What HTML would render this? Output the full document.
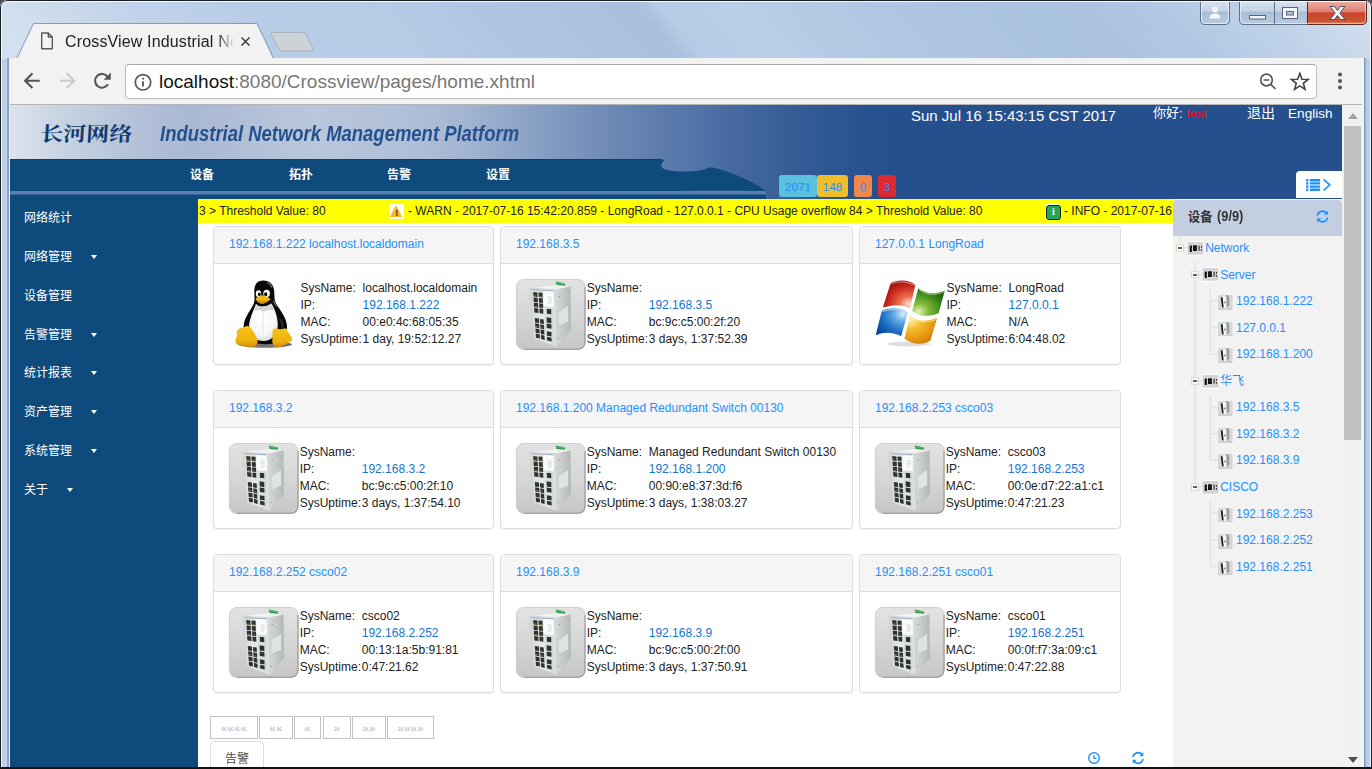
<!DOCTYPE html>
<html lang="zh"><head><meta charset="utf-8"><title>CrossView Industrial Network Management Platform</title>
<style>
*{box-sizing:border-box}
html,body{margin:0;padding:0}
body{width:1372px;height:769px;overflow:hidden;font-family:"Liberation Sans",sans-serif;font-size:12px;color:#333;background:#4a4a4a}
#win{position:relative;width:1372px;height:769px;overflow:hidden;border-radius:7px 7px 0 0;background:linear-gradient(90deg,#bdd2ea 0,#bdd2ea 1%,#c4d5ea 50%,#b2c9e5 99.500%,#bdd3eb 100%)}
#win:before{content:"";position:absolute;left:0;top:0;right:0;bottom:-8px;border:1px solid #1a1d22;border-radius:7px 7px 0 0;box-shadow:inset 0 0 0 1px rgba(255,255,255,.85);z-index:50;pointer-events:none}
#win:after{content:"";position:absolute;left:0;right:0;bottom:0;height:2px;background:#111;z-index:60}
a{color:#1e90ff;text-decoration:none}
svg.cjk{display:inline-block;vertical-align:-1.4px;overflow:visible}
svg.cjk text{font-family:"Liberation Sans","Noto Sans CJK SC",sans-serif}
.abs{position:absolute}

/* ---------- chrome ---------- */
#tb{position:absolute;left:8px;top:58px;width:1356px;height:47px;background:#f2f2f2;border:1px solid #8e9db3;border-bottom:1px solid #b4b4b4;border-top:0}
#tabline{position:absolute;left:8px;top:57px;width:1356px;height:1px;background:#8e9db3}
#tab{position:absolute;left:10px;top:22px;width:270px;height:37px}
#tab-title{position:absolute;left:65px;top:31.500px;font-size:16px;line-height:20px;color:#1d1d1d;white-space:nowrap;width:169px;overflow:hidden;letter-spacing:.15px;
 -webkit-mask-image:linear-gradient(90deg,#000 0,#000 152px,transparent 169px);mask-image:linear-gradient(90deg,#000 0,#000 152px,transparent 169px)}
#omni{position:absolute;left:125px;top:64px;width:1192px;height:35px;background:#fff;border:1px solid #bdbdbd;border-top-color:#a9a9a9;border-radius:4px}
#url{position:absolute;left:159px;top:70px;font-size:19px;line-height:24px;color:#777;white-space:nowrap}
#url b{font-weight:normal;color:#111}

/* ---------- page ---------- */
#page-bg{position:absolute;left:10px;top:105px;width:1332px;height:664px;background:#fff}
#hdr-bg{position:absolute;left:10px;top:105px;width:1332px;height:94px;background:linear-gradient(90deg,#dde3ec 0px,#d0d9e6 30px,#c2cfdf 70px,#b7c5da 110px,#aebdd5 150px,#aab9d2 181px,#aebdd5 220px,#b5c4d9 270px,#b8c7db 306px,#b4c3d9 350px,#b0c0d8 390px,#aabbd5 426px,#9fb2cf 463px,#92a8c9 499px,#859dc2 536px,#7892bb 572px,#6a87b4 609px,#5f7eae 645px,#5375a8 682px,#476ba1 718px,#3d639b 754px,#345b95 791px,#2c5591 827px,#27518e 864px,#25508d 890px,#25508d 1332px)}
#logo{position:absolute;left:40px;top:123.500px;height:24px;transform-origin:0 50%;transform:scaleX(1.15) skewX(-3deg)}
#ttl{position:absolute;left:160px;top:120.500px;font-size:22.300px;line-height:26px;font-weight:bold;font-style:italic;color:#25528f;white-space:nowrap;transform-origin:0 50%;transform:scaleX(.828)}
#date{position:absolute;left:911px;top:106px;font-size:15px;line-height:19px;color:#fff;white-space:nowrap}
#hello{position:absolute;left:1153px;top:105px;font-size:13px;line-height:17px;color:#fff;white-space:nowrap}
#hello .red{color:#ff0a14}
#logout{position:absolute;left:1246.500px;top:106px;line-height:18px}
#lang{position:absolute;left:1288px;top:105px;font-size:13.600px;line-height:18px;color:#fff}
.nav-item{position:absolute;top:167px;height:16px;line-height:16px}
#badges{position:absolute;left:779px;top:175px;height:22px;white-space:nowrap;font-size:12px}
.bd{position:absolute;top:0;height:22px;line-height:23px;text-align:center;border-radius:3px;color:#1e90ff;font-size:11.700px}
.b1{left:0;width:38px;background:#5bc0de}
.b2{left:38px;width:31px;background:#f0bd2c}
.b3{left:75px;width:18px;background:#f0874a}
.b4{left:99px;width:18px;background:#dc2a30}
#toggle{position:absolute;left:1296px;top:171px;width:46px;height:27px;background:#fff;border-radius:4px 0 0 0}

#side-bg{position:absolute;left:10px;top:199px;width:188px;height:570px;background:#0e4a7b}
.side-item{position:absolute;left:24px;height:20px;line-height:20px;white-space:nowrap}
.caret{position:absolute;top:8px;width:0;height:0;border:3.5px solid transparent;border-top:4px solid #fff;border-bottom:0}

#marq{position:absolute;left:198px;top:199px;width:975px;height:24px;background:#ff0;overflow:hidden;font-size:12px;line-height:24px;color:#222;white-space:nowrap}
#marq span{position:absolute;top:0}
#marq i{position:absolute;font-style:normal}
.warn{top:5px;width:15px;height:15px;background:#fffef0}
.warn:before{content:"";position:absolute;left:1px;top:1px;border:6.500px solid transparent;border-bottom:12.500px solid #f6b620;border-top:0}
.warn:after{content:"!";position:absolute;left:6.200px;top:4px;font-size:9px;line-height:10px;font-weight:bold;color:#3a3a3a}
.info{top:5px;width:15px;height:15px;background:#fff}
.info:before{content:"i";position:absolute;left:1px;top:1px;width:13px;height:13px;background:#27a552;border:1px solid #0c2b15;border-radius:3px;color:#fff;font-family:"Liberation Serif",serif;font-weight:bold;font-size:10px;line-height:11px;text-align:center}

/* cards */
.card{position:absolute;height:139px;border:1px solid #ddd;border-radius:4px;background:#fff;box-shadow:0 1px 1px rgba(0,0,0,.05);font-size:12px;line-height:17.14px;color:#222}
.card-h{height:37px;padding:9px 15px 0;background:#f5f5f5;border-bottom:1px solid #ddd;border-radius:3px 3px 0 0;white-space:nowrap;overflow:hidden}
.card-b{position:relative;padding:15px;height:100px}
.ic{position:absolute;left:15px;top:15px;width:70px;height:70px;overflow:visible}
.kv{position:absolute;left:85.5px;top:16px;border-collapse:collapse;border-spacing:0}
.kv td{padding:0 1px;white-space:nowrap;height:17px;line-height:17px}

#pager{position:absolute;left:210px;top:716px;height:23px;white-space:nowrap;font-size:0}
#pager span{position:absolute;top:0;height:23px;border:1px solid #c3c1d0;background:#fff;font-size:11px;line-height:22px;color:#b5b0c6;text-align:center;letter-spacing:.4px}
#tab-alarm{position:absolute;left:210px;top:741px;width:54px;height:40px;border:1px solid #ddd;border-radius:4px 4px 0 0;background:#fff;padding:10px 0 0 13.500px}

/* right panel */
#rp-bg{position:absolute;left:1173px;top:199px;width:169px;height:570px;background:#f2f2f2}
#rp-h{position:absolute;left:1173px;top:200px;width:169px;height:36px;background:#c3cfe0;padding:6.500px 0 0 14.500px;font-size:15px;line-height:19px;color:#333;border-radius:4px 4px 0 0;white-space:nowrap}
#rp-h b{position:absolute;left:44.400px;top:6px;font-weight:bold;transform-origin:0 50%;transform:scaleX(.855)}
#rp-h .cjk{transform-origin:0 50%;transform:scaleX(.935)}
.tn{position:absolute;height:20px;line-height:20px;white-space:nowrap;font-size:12px}
.tn a{position:absolute;top:0}
.exp{position:absolute;left:.200px;top:6.300px;width:7.500px;height:7.500px;border:1px solid #dcd9cf;background:#fbfaf7}
.exp:before{content:"";position:absolute;left:.600px;top:2px;width:4.400px;height:1.700px;background:#606060}
.ti-g{position:absolute;left:12px;top:2.800px;width:15px;height:15.300px}
.tn .ti-g + a{left:29.200px}
.ti-d{position:absolute;left:.200px;top:4.100px;width:14.600px;height:14.600px}
.tn .ti-d + a{left:18px}

/* scrollbar */
#sb{position:absolute;left:1342px;top:105px;width:21px;height:664px;background:#f1f1f1}
#sb .thumb{position:absolute;left:2px;top:21px;width:17px;height:314px;background:#c1c1c1}
#sb .up{position:absolute;left:5.500px;top:8px;border:5px solid transparent;border-bottom:6px solid #a3a3a3;border-top:0}
#sb .down{position:absolute;left:5.500px;top:652px;border:5px solid transparent;border-top:6px solid #505050;border-bottom:0}

#frm-l{position:absolute;left:7px;top:58px;width:3px;height:711px;background:linear-gradient(90deg,#a3b5cf 0,#8799b4 30%,#93a5bf 62%,#e4ebf3 70%,#e9eff6 100%)}
#frm-r{position:absolute;left:1362px;top:58px;width:4px;height:711px;background:linear-gradient(90deg,#f3f5f8 0,#eef2f7 40%,#7b90af 52%,#8da4c4 75%,#a9c2e1 100%)}

#glass{position:absolute;left:0;top:0;width:1372px;height:59px;background:linear-gradient(49deg,#d3e0ef 1.76%,#cddcec 5.98%,#c0d3ea 12.31%,#b7cde7 20.04%,#b5cbe6 29.89%,#afc6e3 36.92%,#aac2e0 43.95%,#a9c1df 48.03%,#b6cce6 49.72%,#b9cee7 55.20%,#b2c9e4 61.53%,#adc5e2 68.57%,#a9c2e0 75.60%,#abc3e1 79.11%,#b3cae5 86.15%,#bfd2e9 91.77%,#d0deee 98.24%)}
.kv td.v{position:relative;left:-1.300px}
.kv a{color:#1474d6}
.kv-sw{left:84.700px}

</style></head><body>
<svg width="0" height="0" style="position:absolute" aria-hidden="true">
<defs>
 <linearGradient id="swbg" x1="0" y1="0" x2="0" y2="1"><stop offset="0" stop-color="#e2e2e2"/><stop offset=".5" stop-color="#d6d6d6"/><stop offset="1" stop-color="#c6c6c6"/></linearGradient>
 <linearGradient id="swside" x1="0" y1="0" x2="1" y2="0"><stop offset="0" stop-color="#d4d8d8"/><stop offset="1" stop-color="#b3b8b8"/></linearGradient>
 <linearGradient id="swfront" x1="0" y1="0" x2="1" y2="0"><stop offset="0" stop-color="#d3d8d6"/><stop offset=".45" stop-color="#e4e8e7"/><stop offset="1" stop-color="#dadedd"/></linearGradient>
 <radialGradient id="wr" cx=".8" cy=".85" r=".95"><stop offset="0" stop-color="#fde3d8"/><stop offset=".3" stop-color="#ec6a4d"/><stop offset=".7" stop-color="#c4241a"/><stop offset="1" stop-color="#8f0e0c"/></radialGradient>
 <radialGradient id="wg" cx=".2" cy=".85" r=".95"><stop offset="0" stop-color="#e3f4bf"/><stop offset=".3" stop-color="#86bd3c"/><stop offset=".7" stop-color="#3f8a1c"/><stop offset="1" stop-color="#215c0e"/></radialGradient>
 <radialGradient id="wb" cx=".85" cy=".2" r=".95"><stop offset="0" stop-color="#d9ecf9"/><stop offset=".3" stop-color="#62a9e3"/><stop offset=".7" stop-color="#1b6cc0"/><stop offset="1" stop-color="#0a4a99"/></radialGradient>
 <radialGradient id="wy" cx=".2" cy=".15" r=".95"><stop offset="0" stop-color="#fff3b8"/><stop offset=".3" stop-color="#f6c234"/><stop offset=".7" stop-color="#e79a12"/><stop offset="1" stop-color="#cf7a08"/></radialGradient>
 <radialGradient id="tuxbelly" cx=".45" cy=".35" r=".7"><stop offset="0" stop-color="#fff"/><stop offset=".7" stop-color="#f6f6f6"/><stop offset="1" stop-color="#d4d4d4"/></radialGradient>
 <linearGradient id="tuxfoot" x1="0" y1="0" x2="0" y2="1"><stop offset="0" stop-color="#f7c416"/><stop offset=".7" stop-color="#efb10e"/><stop offset="1" stop-color="#c98a06"/></linearGradient>
 <symbol id="s-tux" viewBox="0 0 70 70">
  <ellipse cx="36" cy="65.500" rx="27" ry="3.200" fill="rgba(0,0,0,.55)"/>
  <path d="M34.200 1.500 C40.500 1.500 44.600 5.500 45.200 12 C45.600 17 45 20.500 47 24.500 C50 29.500 55 35.500 57 42 C58.600 47 58.400 51 56 53 L51 63 C44 66 28 66 22 63 L15.500 52.500 C13.800 47.500 15 42.500 17 38.500 C19.800 32.500 23.300 28.500 24.800 24.500 C26.300 20.500 25.100 17 25.300 12 C25.500 5.500 28 1.500 34.200 1.500Z" fill="#080808"/>
  <path d="M38.500 4 C40.500 4.500 42 6 42.800 8.500" stroke="#5a5a5a" stroke-width="1.300" fill="none" stroke-linecap="round"/>
  <path d="M27 25 C30 28.500 37.500 28.500 42.200 24.500 C45.500 29 48.300 37 48.700 44 C49.200 52 46.500 58 40.500 60.800 C35 63 28 62.200 24 58 C19.600 53.500 19.400 46.500 21 41 C22.600 35 25 30 27 25Z" fill="url(#tuxbelly)"/>
  <path d="M27 25 C30 28.500 37.500 28.500 42.200 24.500 C43.500 26.500 44.800 29 45.800 31.500 C41 30 37 31.500 34.500 33 C31 30.500 27 31 24.800 31.500 C25.500 29.200 26.300 27 27 25Z" fill="#cfcfcf" opacity=".85"/>
  <path d="M34.300 33.500 C33.600 40 33.800 48 34.300 55" stroke="#dedede" stroke-width=".800" fill="none"/>
  <path d="M49 38 C51.500 42 53 47 52.500 51.500 C54 50.500 55 48 54.500 45 C54 42 52 39.500 49 38Z" fill="#2a2a2a"/>
  <path d="M44.500 22 C45 23.500 46 25.500 47.200 27" stroke="#6a6a6a" stroke-width="1.200" fill="none" stroke-linecap="round"/>
  <ellipse cx="29.500" cy="14.700" rx="2.700" ry="3.400" fill="#fff"/><ellipse cx="37.600" cy="14.500" rx="3.300" ry="3.700" fill="#fff"/>
  <ellipse cx="30.300" cy="15.300" rx="1.400" ry="1.900" fill="#0a0a0a"/><ellipse cx="36.700" cy="15.300" rx="1.600" ry="2" fill="#0a0a0a"/>
  <path d="M26.600 19.600 C29 17.500 31.500 16 33.600 16.200 C36 16.400 39 18.400 41.700 20 C39.500 22.800 36 24.300 33 24.800 C30 24.600 27.400 22.300 26.600 19.600Z" fill="#f2b711"/>
  <path d="M27.500 20.800 C30.500 22.300 36.500 22.300 41 20.300 C39 22.800 36 24.300 33 24.800 C30.500 24.600 28.500 23 27.500 20.800Z" fill="#d29208"/>
  <path d="M17 47.300 C20 45.800 23 50 25.500 54.500 C28 59 29.800 62 27.800 65.200 C25.500 68.800 21 68.800 17 67.700 C12 66.500 7 66 6.400 63 C6 60.500 7.800 59 7.900 56.500 C8 54 7 52 9 50.500 C11 49 14 49 17 47.300Z" fill="url(#tuxfoot)"/>
  <path d="M44.300 50 C45.500 48 49 50.200 52 50.200 C55 50.200 56.500 48.300 58 51 C59.500 54 62 57 63.100 59.500 C63.700 62 60 63.500 57 65 C54 67 51 68.700 47.500 68.200 C44 67.600 43 64 43.400 60 C43.800 56 43 52.500 44.300 50Z" fill="url(#tuxfoot)"/>
 </symbol>
 <symbol id="s-sw" viewBox="0 0 70 70" overflow="visible">
  <rect x=".400" y=".400" width="68.800" height="70" rx="7.500" fill="url(#swbg)" stroke="#c6c6c6" stroke-width=".800"/>
  <path d="M69 8 L69 62.500 Q69 70.300 61.500 70.300 L8 70.300" fill="none" stroke="rgba(60,60,60,.4)" stroke-width="1.100"/>
  <path d="M39.800 2.600 L48.800 4.600 L49.500 7.800 L41 8.400Z" fill="#3a9a52"/><path d="M39.800 2.600 L48.800 4.600 L48.600 5.800 L39.900 4Z" fill="#57b56c"/>
  <path d="M13.900 9.200 L40.400 6 L54.400 7.200 L39.900 10.800Z" fill="#f1f3f3"/>
  <path d="M39.900 10.700 L54.500 7.300 L55.100 50.700 L41 68.300Z" fill="url(#swside)"/>
  <path d="M13.900 9.200 L39.900 10.700 L41 68.300 L17.800 59.500Z" fill="url(#swfront)" stroke="#c2c7c9" stroke-width=".500"/>
  <path d="M42.600 33.500 L52 26.900 L52.200 42.400 L43.200 46.200Z" fill="#e0e3e3"/>
  <circle cx="43.200" cy="17.500" r=".600" fill="#777"/><circle cx="53" cy="13" r=".500" fill="#888"/><circle cx="42.300" cy="59.500" r=".600" fill="#888"/>
  <path d="M27.200 11.600 L37.600 12.300 L37.900 28 L27.700 27Z" fill="#fafbfb"/>
  <path d="M16 10.600 L37.300 11.900" stroke="#9aa7c4" stroke-width=".900"/>
  <g stroke="#a9b0b0" stroke-width=".500"><path d="M31.500 17.800 L35.800 18.100 M31.600 20 L35.900 20.300 M31.700 22.100 L36 22.400 M31.800 24.200 L34.500 24.400"/></g>
  <g fill="#2f332f">
   <path d="M17.200 13.100 L21.400 13.400 L21.600 18 L17.500 17.600Z M22.500 13.500 L26.500 13.800 L26.700 18.500 L22.700 18.100Z"/>
   <path d="M17.500 18.400 L21.700 18.800 L21.900 23.300 L17.800 22.900Z M22.800 18.900 L26.700 19.300 L26.900 23.900 L23 23.500Z"/>
   <path d="M17.800 23.700 L22 24.100 L22.200 28.600 L18.100 28.200Z M23.100 24.300 L27 24.700 L27.200 29.200 L23.300 28.800Z"/>
   <path d="M18.100 29 L22.300 29.500 L22.500 34 L18.400 33.500Z M23.400 29.600 L27.200 30.100 L27.400 34.700 L23.600 34.200Z"/>
   <path d="M18.800 39 L22.900 39.600 L23.100 44 L19.100 43.400Z M24 39.900 L27.700 40.500 L27.900 45 L24.200 44.400Z"/>
   <path d="M19.100 44.200 L23.200 44.900 L23.400 49.300 L19.400 48.600Z M24.300 45.200 L28 45.900 L28.200 50.400 L24.500 49.700Z"/>
   <path d="M19.400 49.400 L23.500 50.200 L23.700 54.500 L19.700 53.700Z M24.600 50.500 L28.200 51.300 L28.400 55.700 L24.800 54.900Z"/>
   <path d="M19.700 54.600 L23.800 55.500 L24 59.600 L20 58.700Z M24.900 55.800 L28.500 56.700 L28.700 60.900 L25.100 60Z"/>
   <path d="M30.800 29.700 L35.200 30.200 L35.300 35.300 L30.900 34.800Z"/>
   <path d="M30.600 38.300 L35.300 39 L35.400 44.200 L30.700 43.400Z M30.700 44.400 L35.400 45.200 L35.500 49.800 L30.800 49Z"/>
   <path d="M30.900 52.200 L35.500 53.100 L35.600 57.600 L31 56.700Z M31 57.800 L35.600 58.700 L35.700 62.600 L31.100 61.600Z"/>
  </g>
  <g fill="#c9a94a" opacity=".75"><rect x="18.400" y="16.600" width="2" height=".700"/><rect x="23.600" y="17" width="2" height=".700"/><rect x="19" y="27.200" width="2" height=".700"/><rect x="24.200" y="27.800" width="2" height=".700"/><rect x="20" y="47.500" width="2" height=".700"/><rect x="25.200" y="48.700" width="2" height=".700"/></g>
  <path d="M29.600 28.700 L36.600 29.400 L36.800 36.300 L29.700 35.500Z M29.500 37.300 L36.800 38.400 L37 64 L30 61.500Z" fill="none" stroke="#c5cacc" stroke-width=".500"/>
 </symbol>
 <symbol id="s-win" viewBox="0 0 70 70">
  <ellipse cx="34" cy="65" rx="21" ry="2.400" fill="rgba(0,0,0,.13)"/>
  <path d="M15.700 4.300 C22 .500 33 .500 40.300 5.900 C38.500 13.500 36.800 21.500 35 29.100 C28 25 16 25.500 7.900 28.600 C10.300 20.500 13 12 15.700 4.300Z" fill="url(#wr)"/>
  <path d="M16.500 5 C22 2 32 2 39.300 6.500" fill="none" stroke="#f7c0b3" stroke-width=".800" opacity=".9"/>
  <path d="M43.300 9.200 C51 15.500 61 15.500 69.800 11.400 C67.800 19 65.700 26.500 63.700 34.100 C55 38.500 45 37.500 37.200 31.900 C39.200 24.300 41.300 16.700 43.300 9.200Z" fill="url(#wg)"/>
  <path d="M44 10.500 C51 16.300 61 16.500 69 12.800" fill="none" stroke="#d9f0b5" stroke-width=".800" opacity=".9"/>
  <path d="M6.800 31.900 C14 28.500 25 28 32.800 33.500 C30.600 41.500 28.300 49.500 26.100 57.300 C19 53 9 52.500 .700 56.200 C2.700 48 4.800 40 6.800 31.900Z" fill="url(#wb)"/>
  <path d="M7.500 32.800 C14 29.800 25 29.300 32 34.300" fill="none" stroke="#cfe6f8" stroke-width=".800" opacity=".9"/>
  <path d="M35 36.900 C42 42.500 53 43 62.100 39.100 C59.900 46.600 57.600 54.200 55.400 61.700 C47 66.500 37 65.500 29.500 59.500 C31.300 52 33.200 44.400 35 36.900Z" fill="url(#wy)"/>
  <path d="M35.600 38.200 C42 43.300 53 43.900 61.300 40.400" fill="none" stroke="#fff2b5" stroke-width=".800" opacity=".9"/>
 </symbol>
 <symbol id="s-grp" viewBox="0 0 15 15">
  <rect x="0" y="0" width="15" height="15.300" fill="#fefefe"/>
  <rect x="0" y="1.500" width="15" height="11.600" fill="#d6d6da"/>
  <rect x=".300" y="1.800" width="14.400" height="11" fill="none" stroke="#b9b9c8" stroke-width=".500"/>
  <path d="M1.700 5.200 Q1.700 4.500 2.800 4.500 L3.900 4.500 L3.900 7.300 L3.300 7.700 L3.900 8.100 L3.900 10.700 L2.800 10.700 Q1.700 10.700 1.700 10Z" fill="#0c0c0c"/>
  <rect x="5" y="4.200" width="3.900" height="5.600" rx=".600" fill="#121212"/>
  <path d="M5.200 6.900 L8.700 6.900" stroke="#3c3c3c" stroke-width=".500"/>
  <rect x="10.400" y="4.500" width="1.400" height="5" fill="#4d4d4d"/>
  <rect x="12.900" y="5.100" width="1.100" height="1.400" fill="#1c1c1c"/><rect x="12.900" y="8.100" width="1.100" height="1.400" fill="#1c1c1c"/>
 </symbol>
 <symbol id="s-dev" viewBox="0 0 15 15">
  <rect x=".200" y=".200" width="14.600" height="14.600" rx="1.300" fill="#d9d9d9" stroke="#c4c4c4" stroke-width=".400"/>
  <path d="M.500 14.600 L14.500 14.600" stroke="#a2a2a2" stroke-width=".800"/>
  <path d="M2.500 2.200 L8.600 1.200 L9 13.700 L4 12.900Z" fill="#f5f6f6"/>
  <path d="M8.600 1.200 L11.600 1.600 L11.700 10.800 L9 13.700Z" fill="#9a9e9e"/>
  <path d="M8.400 .300 L10.800 .600 L10.800 1.600 L8.400 1.300Z" fill="#3fa257"/>
  <path d="M2.800 2.400 L4.700 2.200 L5.800 12.900 L4.100 12.600Z" fill="#161616"/>
  <rect x="6.400" y="6.800" width="1.500" height="1.800" fill="#7a7a7a"/>
 </symbol>
</defs>
</svg>

<div id="win">
<div id="glass"></div>
<svg class="abs" style="left:0;top:0" width="1372" height="60" viewBox="0 0 1372 60">
 <!-- new tab button -->
 <path d="M272.5 32.5 L303 32.5 Q305.5 32.5 306.5 35 L313 49 Q313.8 51 311.5 51 L282 51 Q279.5 51 278.5 48.5 L271.5 34.5 Q270.8 32.5 272.5 32.5Z" fill="#cdd1d8" stroke="#a9b1be" stroke-width="1"/>
 <!-- active tab -->
 <path d="M17 60 L33.800 24 L256.700 24 L273.500 60Z" fill="#f2f2f2"/>
 <path d="M8 58.500 L16.700 58.500 L33.500 23.500 L257 23.500 L273.800 58.500 L1364 58.500" fill="none" stroke="#8b9bb3" stroke-width="1" stroke-linejoin="round"/>
 <!-- page icon -->
 <path d="M41.700 33 L48.300 33 L52.300 37 L52.300 48.800 L41.700 48.800Z M48.300 33 L48.300 37 L52.300 37" fill="#f4f4f4" stroke="#5a5a5a" stroke-width="1.400" stroke-linejoin="round"/>
 <!-- close x -->
 <path d="M241.5 37.5 L249.5 45.5 M249.5 37.5 L241.5 45.5" stroke="#3c3c3c" stroke-width="1.500" fill="none"/>
</svg>
<div id="tb"></div>
<div id="tab-title">CrossView Industrial Network Management Platform</div>
<div id="omni"></div>
<svg class="abs" style="left:10px;top:62px" width="1352" height="40" viewBox="10 62 1352 40" fill="none" stroke="#555" stroke-width="2">
 <!-- back -->
 <path d="M39.800 80.700 L25.500 80.700 M32.500 73.300 L25.100 80.700 L32.500 88.100" stroke="#555" stroke-width="2.100"/>
 <!-- forward -->
 <path d="M59.500 80.700 L73.800 80.700 M66.800 73.300 L74.200 80.700 L66.800 88.100" stroke="#cbcbcb" stroke-width="2.100"/>
 <!-- reload -->
 <path d="M107.650 76.840 A6.900 6.900 0 1 0 107.980 84.250" stroke="#555" stroke-width="2.100"/>
 <path d="M110.800 72.600 L110.800 79.700 L103.700 79.700Z" fill="#555" stroke="none"/>
 <!-- info -->
 <circle cx="143" cy="82.300" r="7.700" stroke="#555" stroke-width="1.700"/>
 <path d="M143 81.200 L143 86.500 M143 77.800 L143 79.500" stroke="#555" stroke-width="1.800"/>
 <!-- zoom -->
 <circle cx="1266.5" cy="80" r="5.8" stroke="#555" stroke-width="1.7"/>
 <path d="M1263.6 80 L1269.4 80 M1270.8 84.3 L1275.5 89" stroke="#555" stroke-width="1.7"/>
 <!-- star -->
 <path d="M1299.8 73.4 L1302.0 79.2 L1308.2 79.5 L1303.3 83.3 L1305.0 89.3 L1299.8 85.9 L1294.6 89.3 L1296.3 83.3 L1291.4 79.5 L1297.6 79.2Z" stroke="#444" stroke-width="1.600" stroke-linejoin="miter"/>
 <!-- menu dots -->
 <g fill="#555" stroke="none"><circle cx="1340" cy="74.5" r="2"/><circle cx="1340" cy="81" r="2"/><circle cx="1340" cy="87.500" r="2"/></g>
</svg>
<div id="url"><b>localhost</b>:8080/Crossview/pages/home.xhtml</div>
<!-- window buttons -->
<svg class="abs" style="left:1195px;top:0" width="177" height="30" viewBox="1195 0 177 30">
 <defs>
  <linearGradient id="gbtn" x1="0" y1="0" x2="0" y2="1"><stop offset="0" stop-color="#dbe5f1"/><stop offset=".45" stop-color="#c3d2e5"/><stop offset=".5" stop-color="#a9bdd8"/><stop offset="1" stop-color="#b9cbe2"/></linearGradient>
  <linearGradient id="gcls" x1="0" y1="0" x2="0" y2="1"><stop offset="0" stop-color="#f1b2a6"/><stop offset=".47" stop-color="#dd8173"/><stop offset=".53" stop-color="#cd452c"/><stop offset=".85" stop-color="#ca5232"/><stop offset="1" stop-color="#dc8a68"/></linearGradient>
 </defs>
 <path d="M1200.5 0 L1200.5 20 Q1200.5 24.5 1205 24.5 L1225 24.5 Q1229.5 24.5 1229.5 20 L1229.5 0Z" fill="url(#gbtn)" stroke="#5f6f86" stroke-width="1"/>
 <path d="M1201.5 0 L1201.5 20 Q1201.5 23.5 1205 23.5 L1225 23.5 Q1228.5 23.5 1228.5 20 L1228.5 0" fill="none" stroke="rgba(255,255,255,.6)" stroke-width="1"/>
 <circle cx="1215" cy="9.5" r="3" fill="#f4f6f9"/><path d="M1209.5 18.5 Q1209.5 13.5 1215 13.5 Q1220.500 13.5 1220.5 18.500Z" fill="#f4f6f9"/>
 <path d="M1239.5 0 L1239.5 20 Q1239.5 24.5 1244 24.5 L1307.500 24.5 L1307.500 0Z" fill="url(#gbtn)" stroke="#5f6f86" stroke-width="1"/>
 <path d="M1307.500 0 L1307.500 24.5 L1362 24.5 Q1366.500 24.5 1366.500 20 L1366.500 0Z" fill="url(#gcls)" stroke="#5d2a22" stroke-width="1"/>
 <path d="M1240.5 0 L1240.5 20 Q1240.5 23.5 1244 23.5 L1362 23.5 Q1365.500 23.5 1365.500 20 L1365.500 0" fill="none" stroke="rgba(255,255,255,.5)" stroke-width="1"/>
 <path d="M1274.500 0 L1274.500 24" stroke="#5f6f86" stroke-width="1"/>
 <rect x="1249.500" y="15.5" width="16" height="3.500" fill="#f4f6f9" stroke="#5a6475" stroke-width="1"/>
 <rect x="1282.500" y="7.5" width="15" height="11" fill="#f4f6f9" stroke="#5a6475" stroke-width="1"/><rect x="1286.500" y="11.5" width="7" height="3.500" fill="#b5c5dc" stroke="#5a6475" stroke-width="1"/>
 <path d="M1330 6.500 L1334.500 6.500 L1337.500 10.500 L1340.500 6.500 L1345 6.500 L1339.800 13 L1345 19.500 L1340.500 19.500 L1337.500 15.500 L1334.500 19.500 L1330 19.500 L1335.200 13Z" fill="#f6f6f6" stroke="#46506a" stroke-width="1"/>
</svg>

<div id="page">
<div id="page-bg"></div>
<div id="hdr">
<div id="hdr-bg"></div>
<div id="logo"><svg class="cjk" width="80.2" height="19.0" viewBox="0 -167 802 190" role="img" aria-label="长河网络"><text x="0" y="0" font-size="200" font-weight="bold" fill="#103a72" textLength="802" lengthAdjust="spacing" style="font-family:'Liberation Serif','Noto Serif CJK SC',serif">长河网络</text></svg></div>
<div id="ttl">Industrial Network Management Platform</div>
<div id="date">Sun Jul 16 15:43:15 CST 2017</div>
<div id="hello"><svg class="cjk" width="26.0" height="13.0" viewBox="0 -114 260 130" role="img" aria-label="你好"><text x="0" y="0" font-size="130" fill="#fff">你好</text></svg><span>: </span><span class="red">test</span></div>
<div id="logout"><svg class="cjk" width="28.0" height="14.0" viewBox="0 -123 280 140" role="img" aria-label="退出"><text x="0" y="0" font-size="140" fill="#fff">退出</text></svg></div>
<div id="lang">English</div>
<svg class="abs" style="left:10px;top:155px" width="770" height="45" viewBox="10 155 770 45">
 <path d="M10 159.500 L662 159.500 C664.500 159.500 664 161 662.500 162.500 C660 165 661 168.500 667 170 C676 172 690 172 700 170.500 C706 169.500 708 167 712 167.500 C728 170.500 750 180 766 190.500 L766 199 L10 199Z" fill="#0e4a7b"/>
 <path d="M10 191 L666 191 C700 190.500 740 190.500 766 191 L766 194.500 L10 194.500Z" fill="#5a7eae"/>
 <path d="M10 159.500 L662 159.500" stroke="#0b3f6b" stroke-width="1"/>
</svg>

<div class="nav-item" style="left:190px"><svg class="cjk" width="24.0" height="12.0" viewBox="0 -106 240 120" role="img" aria-label="设备"><text x="0" y="0" font-size="120" font-weight="bold" fill="#fff">设备</text></svg></div><div class="nav-item" style="left:288.5px"><svg class="cjk" width="24.0" height="12.0" viewBox="0 -106 240 120" role="img" aria-label="拓扑"><text x="0" y="0" font-size="120" font-weight="bold" fill="#fff">拓扑</text></svg></div><div class="nav-item" style="left:387px"><svg class="cjk" width="24.0" height="12.0" viewBox="0 -106 240 120" role="img" aria-label="告警"><text x="0" y="0" font-size="120" font-weight="bold" fill="#fff">告警</text></svg></div><div class="nav-item" style="left:485.5px"><svg class="cjk" width="24.0" height="12.0" viewBox="0 -106 240 120" role="img" aria-label="设置"><text x="0" y="0" font-size="120" font-weight="bold" fill="#fff">设置</text></svg></div>
<div id="badges"><span class="bd b1">2071</span><span class="bd b2">148</span><span class="bd b3">0</span><span class="bd b4">3</span></div>
<div id="toggle"><svg class="abs" style="left:0;top:0" width="46" height="27" viewBox="1296 171 46 27" fill="#1e90ff">
 <rect x="1306.100" y="179" width="2.300" height="2.400"/><rect x="1309.800" y="179" width="10.200" height="2.400" rx=".500"/>
 <rect x="1306.100" y="182.200" width="2.300" height="2.400"/><rect x="1309.800" y="182.200" width="10.200" height="2.400" rx=".500"/>
 <rect x="1306.100" y="185.400" width="2.300" height="2.400"/><rect x="1309.800" y="185.400" width="10.200" height="2.400" rx=".500"/>
 <rect x="1306.100" y="188.600" width="2.300" height="2.400"/><rect x="1309.800" y="188.600" width="10.200" height="2.400" rx=".500"/>
 <path d="M1323.600 179.300 L1329.800 184.800 L1323.600 190.300" fill="none" stroke="#1e90ff" stroke-width="1.600"/>
</svg>
</div>
</div>
<div id="side"><div id="side-bg"></div>
<div class="side-item" style="top:208px"><svg class="cjk" width="48.0" height="12.0" viewBox="0 -106 480 120" role="img" aria-label="网络统计"><text x="0" y="0" font-size="120" fill="#fff">网络统计</text></svg></div>
<div class="side-item" style="top:247px"><svg class="cjk" width="48.0" height="12.0" viewBox="0 -106 480 120" role="img" aria-label="网络管理"><text x="0" y="0" font-size="120" fill="#fff">网络管理</text></svg><i class="caret" style="left:67px"></i></div>
<div class="side-item" style="top:286px"><svg class="cjk" width="48.0" height="12.0" viewBox="0 -106 480 120" role="img" aria-label="设备管理"><text x="0" y="0" font-size="120" fill="#fff">设备管理</text></svg></div>
<div class="side-item" style="top:325px"><svg class="cjk" width="48.0" height="12.0" viewBox="0 -106 480 120" role="img" aria-label="告警管理"><text x="0" y="0" font-size="120" fill="#fff">告警管理</text></svg><i class="caret" style="left:67px"></i></div>
<div class="side-item" style="top:363px"><svg class="cjk" width="48.0" height="12.0" viewBox="0 -106 480 120" role="img" aria-label="统计报表"><text x="0" y="0" font-size="120" fill="#fff">统计报表</text></svg><i class="caret" style="left:67px"></i></div>
<div class="side-item" style="top:402px"><svg class="cjk" width="48.0" height="12.0" viewBox="0 -106 480 120" role="img" aria-label="资产管理"><text x="0" y="0" font-size="120" fill="#fff">资产管理</text></svg><i class="caret" style="left:67px"></i></div>
<div class="side-item" style="top:441px"><svg class="cjk" width="48.0" height="12.0" viewBox="0 -106 480 120" role="img" aria-label="系统管理"><text x="0" y="0" font-size="120" fill="#fff">系统管理</text></svg><i class="caret" style="left:67px"></i></div>
<div class="side-item" style="top:480px"><svg class="cjk" width="24.0" height="12.0" viewBox="0 -106 240 120" role="img" aria-label="关于"><text x="0" y="0" font-size="120" fill="#fff">关于</text></svg><i class="caret" style="left:43px"></i></div>
</div>
<div id="main">
<div id="marq"><span style="left:1px">3 &gt; Threshold Value: 80</span><i class="warn" style="left:191px"></i><span style="left:210px">- WARN - 2017-07-16 15:42:20.859 - LongRoad - 127.0.0.1 - CPU Usage overflow 84 &gt; Threshold Value: 80</span><i class="info" style="left:847px"></i><span style="left:866px">- INFO - 2017-07-16</span></div>
<div class="card" style="left:213px;top:226px;width:281px">
<div class="card-h"><a>192.168.1.222 localhost.localdomain</a></div>
<div class="card-b"><svg class="ic ic-tux" viewBox="0 0 70 70"><use href="#s-tux"/></svg>
<table class="kv kv-tux"><tr><td>SysName:</td><td class="v">localhost.localdomain</td></tr>
<tr><td>IP:</td><td class="v"><a>192.168.1.222</a></td></tr>
<tr><td>MAC:</td><td class="v">00:e0:4c:68:05:35</td></tr>
<tr><td>SysUptime:</td><td class="v">1 day, 19:52:12.27</td></tr></table></div></div>
<div class="card" style="left:500px;top:226px;width:353px">
<div class="card-h"><a>192.168.3.5</a></div>
<div class="card-b"><svg class="ic ic-sw" viewBox="0 0 70 70"><use href="#s-sw"/></svg>
<table class="kv kv-sw"><tr><td>SysName:</td><td class="v"></td></tr>
<tr><td>IP:</td><td class="v"><a>192.168.3.5</a></td></tr>
<tr><td>MAC:</td><td class="v">bc:9c:c5:00:2f:20</td></tr>
<tr><td>SysUptime:</td><td class="v">3 days, 1:37:52.39</td></tr></table></div></div>
<div class="card" style="left:859px;top:226px;width:262px">
<div class="card-h"><a>127.0.0.1 LongRoad</a></div>
<div class="card-b"><svg class="ic ic-win" viewBox="0 0 70 70"><use href="#s-win"/></svg>
<table class="kv kv-win"><tr><td>SysName:</td><td class="v">LongRoad</td></tr>
<tr><td>IP:</td><td class="v"><a>127.0.0.1</a></td></tr>
<tr><td>MAC:</td><td class="v">N/A</td></tr>
<tr><td>SysUptime:</td><td class="v">6:04:48.02</td></tr></table></div></div>
<div class="card" style="left:213px;top:390px;width:281px">
<div class="card-h"><a>192.168.3.2</a></div>
<div class="card-b"><svg class="ic ic-sw" viewBox="0 0 70 70"><use href="#s-sw"/></svg>
<table class="kv kv-sw"><tr><td>SysName:</td><td class="v"></td></tr>
<tr><td>IP:</td><td class="v"><a>192.168.3.2</a></td></tr>
<tr><td>MAC:</td><td class="v">bc:9c:c5:00:2f:10</td></tr>
<tr><td>SysUptime:</td><td class="v">3 days, 1:37:54.10</td></tr></table></div></div>
<div class="card" style="left:500px;top:390px;width:353px">
<div class="card-h"><a>192.168.1.200 Managed Redundant Switch 00130</a></div>
<div class="card-b"><svg class="ic ic-sw" viewBox="0 0 70 70"><use href="#s-sw"/></svg>
<table class="kv kv-sw"><tr><td>SysName:</td><td class="v">Managed Redundant Switch 00130</td></tr>
<tr><td>IP:</td><td class="v"><a>192.168.1.200</a></td></tr>
<tr><td>MAC:</td><td class="v">00:90:e8:37:3d:f6</td></tr>
<tr><td>SysUptime:</td><td class="v">3 days, 1:38:03.27</td></tr></table></div></div>
<div class="card" style="left:859px;top:390px;width:262px">
<div class="card-h"><a>192.168.2.253 csco03</a></div>
<div class="card-b"><svg class="ic ic-sw" viewBox="0 0 70 70"><use href="#s-sw"/></svg>
<table class="kv kv-sw"><tr><td>SysName:</td><td class="v">csco03</td></tr>
<tr><td>IP:</td><td class="v"><a>192.168.2.253</a></td></tr>
<tr><td>MAC:</td><td class="v">00:0e:d7:22:a1:c1</td></tr>
<tr><td>SysUptime:</td><td class="v">0:47:21.23</td></tr></table></div></div>
<div class="card" style="left:213px;top:554px;width:281px">
<div class="card-h"><a>192.168.2.252 csco02</a></div>
<div class="card-b"><svg class="ic ic-sw" viewBox="0 0 70 70"><use href="#s-sw"/></svg>
<table class="kv kv-sw"><tr><td>SysName:</td><td class="v">csco02</td></tr>
<tr><td>IP:</td><td class="v"><a>192.168.2.252</a></td></tr>
<tr><td>MAC:</td><td class="v">00:13:1a:5b:91:81</td></tr>
<tr><td>SysUptime:</td><td class="v">0:47:21.62</td></tr></table></div></div>
<div class="card" style="left:500px;top:554px;width:353px">
<div class="card-h"><a>192.168.3.9</a></div>
<div class="card-b"><svg class="ic ic-sw" viewBox="0 0 70 70"><use href="#s-sw"/></svg>
<table class="kv kv-sw"><tr><td>SysName:</td><td class="v"></td></tr>
<tr><td>IP:</td><td class="v"><a>192.168.3.9</a></td></tr>
<tr><td>MAC:</td><td class="v">bc:9c:c5:00:2f:00</td></tr>
<tr><td>SysUptime:</td><td class="v">3 days, 1:37:50.91</td></tr></table></div></div>
<div class="card" style="left:859px;top:554px;width:262px">
<div class="card-h"><a>192.168.2.251 csco01</a></div>
<div class="card-b"><svg class="ic ic-sw" viewBox="0 0 70 70"><use href="#s-sw"/></svg>
<table class="kv kv-sw"><tr><td>SysName:</td><td class="v">csco01</td></tr>
<tr><td>IP:</td><td class="v"><a>192.168.2.251</a></td></tr>
<tr><td>MAC:</td><td class="v">00:0f:f7:3a:09:c1</td></tr>
<tr><td>SysUptime:</td><td class="v">0:47:22.88</td></tr></table></div></div>
<div id="pager"><span style="left:0;width:48px">&laquo;&laquo;&laquo;&laquo;</span><span style="left:49px;width:34px">&laquo;&laquo;</span><span style="left:84px;width:27px">&laquo;</span><span style="left:113px;width:28px">&raquo;</span><span style="left:142px;width:34px">&raquo;&raquo;</span><span style="left:177px;width:47px">&raquo;&raquo;&raquo;&raquo;</span></div>
<div id="tab-alarm"><svg class="cjk" width="24.0" height="12.0" viewBox="0 -106 240 120" role="img" aria-label="告警"><text x="0" y="0" font-size="120" fill="#4a4a4a">告警</text></svg></div>
<svg class="abs" style="left:1087px;top:750px" width="60" height="16" viewBox="0 0 60 16" fill="none" stroke="#1e90ff">
 <circle cx="7" cy="8" r="5.300" stroke-width="1.400"/><path d="M7 5 L7 8.300 L9.500 8.300" stroke-width="1.300"/>
 <g transform="translate(44.500,1.500)" stroke-width="1.700"><path d="M1.500 5.500 A5 5 0 0 1 10.500 3.300"/><path d="M11.500 7.500 A5 5 0 0 1 2.500 9.700"/>
 <path d="M11.800 0.800 L11.800 4.800 L7.800 4.800Z" fill="#1e90ff" stroke="none"/><path d="M1.200 12.200 L1.200 8.200 L5.200 8.200Z" fill="#1e90ff" stroke="none"/></g>
</svg>

</div>
<div id="rp"><div id="rp-bg"></div>
<div id="rp-h"><svg class="cjk" width="26.0" height="13.0" viewBox="0 -114 260 130" role="img" aria-label="设备"><text x="0" y="0" font-size="130" font-weight="bold" fill="#333">设备</text></svg><b>(9/9)</b><svg class="abs" style="left:143px;top:10px" width="13" height="13" viewBox="0 0 13 13" fill="none" stroke="#1e90ff" stroke-width="1.700">
 <path d="M1.500 5.500 A5 5 0 0 1 10.500 3.300"/><path d="M11.500 7.500 A5 5 0 0 1 2.500 9.700"/>
 <path d="M11.800 0.800 L11.800 4.800 L7.800 4.800Z" fill="#1e90ff" stroke="none"/><path d="M1.200 12.200 L1.200 8.200 L5.200 8.200Z" fill="#1e90ff" stroke="none"/>
</svg>
</div>
<svg class="abs" style="left:1173px;top:236px" width="169" height="350" viewBox="1173 236 169 350" fill="none" stroke="#e6e4de" stroke-width="1.600">
 <path d="M1180.300 236 L1180.300 243.500"/>
 <path d="M1195.300 262 L1195.300 487"/>
 <path d="M1183.500 247.800 L1188 247.800 M1198.500 274.500 L1203 274.500 M1198.500 380.600 L1203 380.600 M1198.500 486.800 L1203 486.800"/>
 <path d="M1210.300 289 L1210.300 354 M1210.300 300.900 L1218 300.900 M1210.300 327.400 L1218 327.400 M1210.300 354 L1218 354"/>
 <path d="M1210.300 395 L1210.300 460.200 M1210.300 407.100 L1218 407.100 M1210.300 433.700 L1218 433.700 M1210.300 460.200 L1218 460.200"/>
 <path d="M1210.300 501 L1210.300 566.400 M1210.300 513.300 L1218 513.300 M1210.300 539.800 L1218 539.800 M1210.300 566.400 L1218 566.400"/>
</svg>

<div class="tn" style="top:238.00px;left:1176px"><i class="exp"></i><svg class="ti-g" viewBox="0 0 15 15" preserveAspectRatio="none"><use href="#s-grp"/></svg><a>Network</a></div>
<div class="tn" style="top:264.55px;left:1191px"><i class="exp"></i><svg class="ti-g" viewBox="0 0 15 15" preserveAspectRatio="none"><use href="#s-grp"/></svg><a>Server</a></div>
<div class="tn" style="top:291.10px;left:1218px"><svg class="ti-d" viewBox="0 0 15 15"><use href="#s-dev"/></svg><a>192.168.1.222</a></div>
<div class="tn" style="top:317.65px;left:1218px"><svg class="ti-d" viewBox="0 0 15 15"><use href="#s-dev"/></svg><a>127.0.0.1</a></div>
<div class="tn" style="top:344.20px;left:1218px"><svg class="ti-d" viewBox="0 0 15 15"><use href="#s-dev"/></svg><a>192.168.1.200</a></div>
<div class="tn" style="top:370.75px;left:1191px"><i class="exp"></i><svg class="ti-g" viewBox="0 0 15 15" preserveAspectRatio="none"><use href="#s-grp"/></svg><a><svg class="cjk" width="24.0" height="12.0" viewBox="0 -106 240 120" role="img" aria-label="华飞"><text x="0" y="0" font-size="120" fill="#1e90ff">华飞</text></svg></a></div>
<div class="tn" style="top:397.30px;left:1218px"><svg class="ti-d" viewBox="0 0 15 15"><use href="#s-dev"/></svg><a>192.168.3.5</a></div>
<div class="tn" style="top:423.85px;left:1218px"><svg class="ti-d" viewBox="0 0 15 15"><use href="#s-dev"/></svg><a>192.168.3.2</a></div>
<div class="tn" style="top:450.40px;left:1218px"><svg class="ti-d" viewBox="0 0 15 15"><use href="#s-dev"/></svg><a>192.168.3.9</a></div>
<div class="tn" style="top:476.95px;left:1191px"><i class="exp"></i><svg class="ti-g" viewBox="0 0 15 15" preserveAspectRatio="none"><use href="#s-grp"/></svg><a>CISCO</a></div>
<div class="tn" style="top:503.50px;left:1218px"><svg class="ti-d" viewBox="0 0 15 15"><use href="#s-dev"/></svg><a>192.168.2.253</a></div>
<div class="tn" style="top:530.05px;left:1218px"><svg class="ti-d" viewBox="0 0 15 15"><use href="#s-dev"/></svg><a>192.168.2.252</a></div>
<div class="tn" style="top:556.60px;left:1218px"><svg class="ti-d" viewBox="0 0 15 15"><use href="#s-dev"/></svg><a>192.168.2.251</a></div>

</div>
<div id="sb"><i class="up"></i><i class="thumb"></i><i class="down"></i></div>
<div id="frm-l"></div><div id="frm-r"></div>
</div>
</div>
</body></html>
